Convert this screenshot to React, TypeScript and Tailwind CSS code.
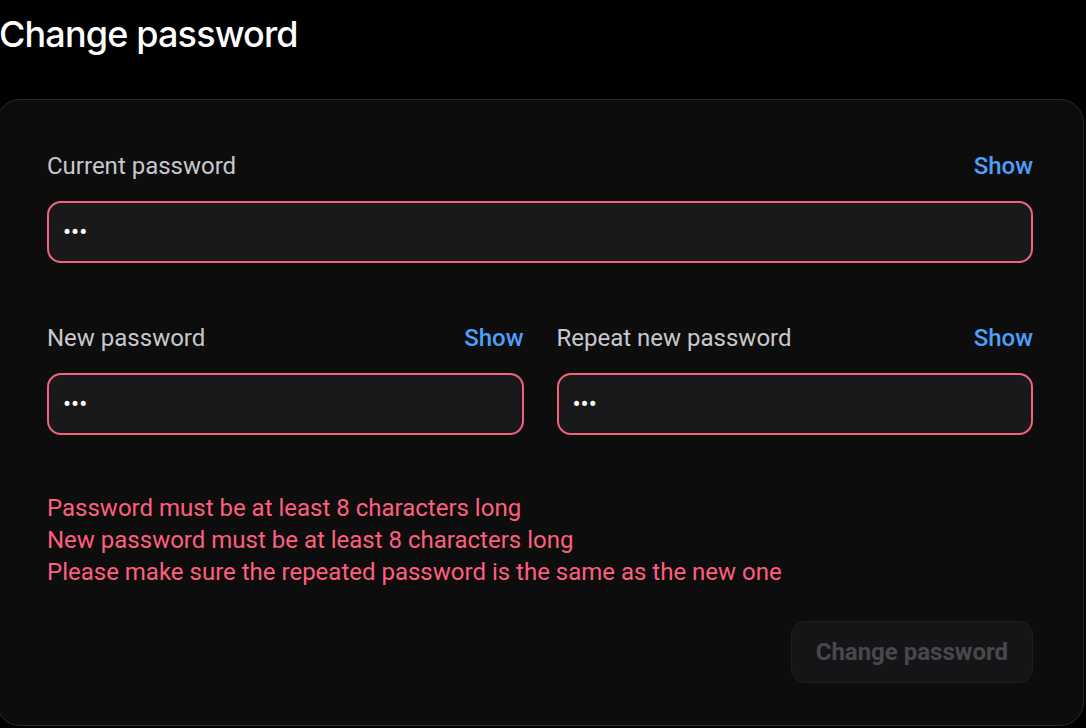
import { useState } from "react";

const labelCls = "text-[24px] leading-[30px] text-[#c8c8cc]";
const showCls = "text-[24px] leading-[30px] font-medium text-[#4c9ffa]";
const inputCls =
  "w-full h-[62px] rounded-[14px] border-2 border-[#f0637c] bg-[#19191c] px-[14px] text-[24px] text-white outline-none";

function PasswordField({ label, value }: { label: string; value: string }) {
  const [shown, setShown] = useState(false);
  return (
    <div className="flex flex-col gap-5 flex-1 min-w-0">
      <div className="flex items-center justify-between">
        <span className={labelCls}>{label}</span>
        <button type="button" onClick={() => setShown(!shown)} className={showCls}>
          {shown ? "Hide" : "Show"}
        </button>
      </div>
      <input type={shown ? "text" : "password"} value={value} readOnly className={inputCls} />
    </div>
  );
}

export default function App() {
  const errors = [
    "Password must be at least 8 characters long",
    "New password must be at least 8 characters long",
    "Please make sure the repeated password is the same as the new one",
  ];
  return (
    <div className="min-h-screen bg-black overflow-hidden" style={{ fontFamily: "Roboto, 'Liberation Sans', sans-serif" }}>
      <div className="ml-[-4px] w-[1088px]">
        <h1
          className="ml-[3px] pt-[12px] h-[99px] text-[36px] leading-[44px] font-medium tracking-[-0.85px] text-white"
          style={{ fontFamily: "Inter, 'Noto Sans', sans-serif" }}
        >
          Change password
        </h1>
        <section className="rounded-[24px] border border-[#2a2a2e] bg-[#0d0d0e] px-[50px] pt-[51px] pb-[42px]">
          <PasswordField label="Current password" value="abc" />
          <div className="mt-[60px] flex gap-[33px]">
            <PasswordField label="New password" value="abc" />
            <PasswordField label="Repeat new password" value="abc" />
          </div>
          <div className="mt-[57px] flex flex-col text-[24px] leading-[32px] text-[#ff5f7e]">
            {errors.map((e) => (
              <div key={e}>{e}</div>
            ))}
          </div>
          <div className="mt-[33px] flex justify-end">
            <button
              type="button"
              disabled
              className="h-[62px] px-[24px] rounded-[14px] border border-[#1e1e21] bg-[#151517] text-[24px] font-bold text-[#48484c]"
            >
              Change password
            </button>
          </div>
        </section>
      </div>
    </div>
  );
}
